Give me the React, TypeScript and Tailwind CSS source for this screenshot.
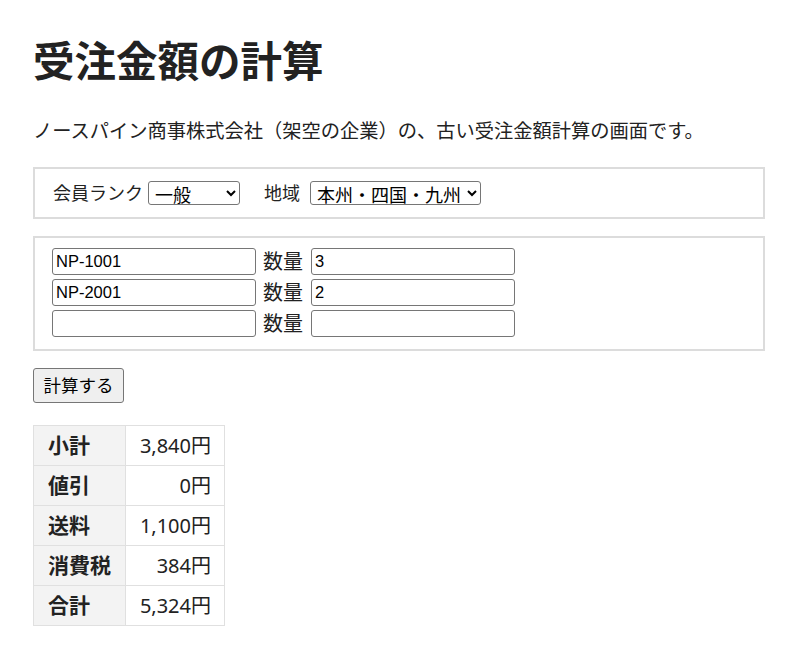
import React from "react";

const rows: [string, string][] = [
  ["小計", "3,840円"],
  ["値引", "0円"],
  ["送料", "1,100円"],
  ["消費税", "384円"],
  ["合計", "5,324円"],
];

const items = [
  { code: "NP-1001", qty: "3" },
  { code: "NP-2001", qty: "2" },
  { code: "", qty: "" },
];

export default function App() {
  return (
    <div
      className="min-h-[651px] bg-white px-[33px] text-[#222]"
      style={{ fontFamily: '"Noto Sans", "Noto Sans CJK JP", sans-serif' }}
    >
      <h1 className="pt-[36px] text-[41.5px] font-bold leading-[50px] text-[#222]">受注金額の計算</h1>
      <p className="mt-[31px] text-[19.25px] leading-[28px]">
        ノースパイン商事株式会社（架空の企業）の、古い受注金額計算の画面です。
      </p>

      <div className="mt-[22px] flex h-[52px] w-[732px] items-center border-2 border-[#dcdcdc] pl-[18px]">
        <label className="flex items-center text-[18px]">
          会員ランク
          <select
            defaultValue="一般"
            className="ml-[5px] h-[24px] w-[92px] rounded-[3px] border border-[#767676] bg-white px-[2px] text-[18px] leading-[20px] text-black"
          >
            <option>一般</option>
          </select>
        </label>
        <label className="ml-[24px] flex items-center text-[18px]">
          地域
          <select
            defaultValue="本州・四国・九州"
            className="ml-[10px] h-[24px] w-[171px] rounded-[3px] border border-[#767676] bg-white px-[2px] text-[18px] leading-[20px] text-black"
          >
            <option>本州・四国・九州</option>
          </select>
        </label>
      </div>

      <div className="mt-[17px] flex w-[732px] flex-col gap-[4px] border-2 border-[#dcdcdc] pb-[12px] pl-[17px] pt-[10px]">
        {items.map((it, i) => (
          <div key={i} className="flex items-center">
            <input
              readOnly
              value={it.code}
              className="h-[27px] w-[204px] rounded-[3px] border border-[#767676] px-[3px] text-[16.5px] text-black"
              style={{ fontFamily: '"Liberation Sans", Arial, sans-serif' }}
            />
            <span className="ml-[7px] mr-[8px] text-[20px] leading-[27px]">数量</span>
            <input
              readOnly
              value={it.qty}
              className="h-[27px] w-[204px] rounded-[3px] border border-[#767676] px-[3px] text-[16.5px] text-black"
              style={{ fontFamily: '"Liberation Sans", Arial, sans-serif' }}
            />
          </div>
        ))}
      </div>

      <button className="mt-[17px] h-[35px] w-[91px] rounded-[3px] border border-[#767676] bg-[#efefef] text-[17.5px] text-black">
        計算する
      </button>

      <table className="mt-[22px] border-collapse">
        <tbody>
          {rows.map(([k, v]) => (
            <tr key={k} className="h-[40px]">
              <th className="w-[92px] border border-[#e0e0e0] bg-[#f3f3f3] pl-[14px] text-left text-[21px] font-bold">{k}</th>
              <td className="w-[99px] border border-[#e0e0e0] pr-[13px] text-right text-[20px]">{v}</td>
            </tr>
          ))}
        </tbody>
      </table>
    </div>
  );
}
